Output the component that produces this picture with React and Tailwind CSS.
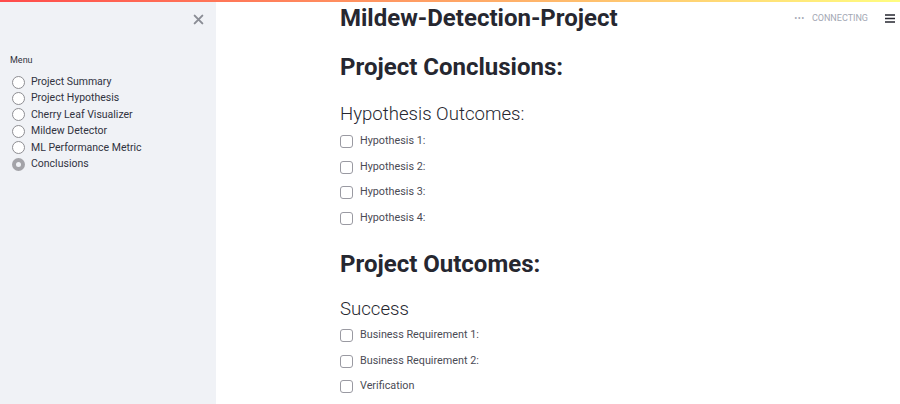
import React from "react";

const font = { fontFamily: 'Roboto, "Liberation Sans", sans-serif' };

function Radio({ label, checked }) {
  return (
    <div className="flex items-center h-[16.4px]">
      {checked ? (
        <span className="w-[13px] h-[13px] rounded-full bg-[#a3a3a8] flex items-center justify-center">
          <span className="w-[5px] h-[5px] rounded-full bg-[#f0f2f6]" />
        </span>
      ) : (
        <span className="w-[13px] h-[13px] rounded-full border border-[#8e8e93] bg-white" />
      )}
      <span className="ml-[6px] text-[10.5px] text-[#31333f] leading-none">{label}</span>
    </div>
  );
}

function Check({ label }) {
  return (
    <div className="flex items-center h-[25.5px]">
      <span className="w-[13px] h-[13px] rounded-[3px] border border-[#9a9aa2] bg-white" />
      <span className="ml-[7px] text-[10.8px] text-[#4a4b55] leading-none">{label}</span>
    </div>
  );
}

export default function App() {
  return (
    <div className="relative w-[900px] h-[404px] overflow-hidden bg-white" style={font}>
      <div className="absolute top-0 left-0 right-0 h-[2px] z-10 bg-[linear-gradient(90deg,#ff4b4b,#fffd80)]" />
      <div className="flex h-full">
        <aside className="w-[216px] h-full bg-[#f0f2f6] relative shrink-0">
          <div className="flex justify-end pr-[12px] pt-[14px]">
            <svg width="11" height="11" viewBox="0 0 10 10">
              <path d="M1.5 1.5 L8.5 8.5 M8.5 1.5 L1.5 8.5" stroke="#8a8d95" strokeWidth="1.8" strokeLinecap="round" />
            </svg>
          </div>
          <div className="pl-[10px] mt-[31px] text-[9px] text-[#31333f] leading-none">Menu</div>
          <div className="pl-[12px] mt-[9px] flex flex-col">
            <Radio label="Project Summary" />
            <Radio label="Project Hypothesis" />
            <Radio label="Cherry Leaf Visualizer" />
            <Radio label="Mildew Detector" />
            <Radio label="ML Performance Metric" />
            <Radio label="Conclusions" checked />
          </div>
        </aside>
        <main className="flex-1 relative">
          <div className="absolute top-[14px] right-[5px] flex items-center">
            <span className="text-[9px] text-[#a3a8b4] tracking-[0.5px] mr-[7px] leading-none">•••</span>
            <span className="text-[9px] text-[#a3a8b4] leading-none">CONNECTING</span>
            <svg className="ml-[17px]" width="10" height="9" viewBox="0 0 10 9">
              <path d="M0 1 H10 M0 4.5 H10 M0 8 H10" stroke="#262730" strokeWidth="1.5" />
            </svg>
          </div>
          <div className="pl-[124px] text-[#262730]">
            <h1 className="text-[24px] font-bold leading-[34px] pt-[1px]">Mildew-Detection-Project</h1>
            <h2 className="text-[24px] font-bold leading-[30px] mt-[17px]">Project Conclusions:</h2>
            <h3 className="text-[18.6px] font-light leading-[24px] mt-[20px]">Hypothesis Outcomes:</h3>
            <div className="mt-[3px] flex flex-col">
              <Check label="Hypothesis 1:" />
              <Check label="Hypothesis 2:" />
              <Check label="Hypothesis 3:" />
              <Check label="Hypothesis 4:" />
            </div>
            <h2 className="text-[24px] font-bold leading-[30px] mt-[18px]">Project Outcomes:</h2>
            <h3 className="text-[18.6px] font-light leading-[24px] mt-[18px]">Success</h3>
            <div className="mt-[2px] flex flex-col">
              <Check label="Business Requirement 1:" />
              <Check label="Business Requirement 2:" />
              <Check label="Verification" />
            </div>
          </div>
        </main>
      </div>
    </div>
  );
}
